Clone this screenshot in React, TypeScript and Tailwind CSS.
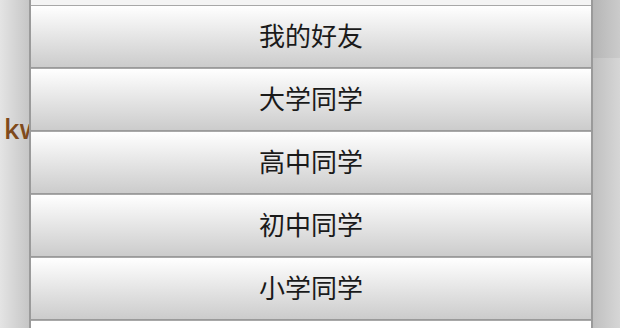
import React from "react";

const rows = ["我的好友", "大学同学", "高中同学", "初中同学", "小学同学"];

export default function App() {
  return (
    <div className="flex w-[620px] h-[328px] overflow-hidden bg-white">
      <div className="w-[29px] h-full shrink-0 overflow-hidden bg-gradient-to-r from-[#e4e4e4] to-[#c6c6c6] flex flex-col">
        <div className="h-[113px] shrink-0" />
        <div
          className="pl-[4px] text-[27px] leading-[32px] font-semibold text-[#7f4a1c] whitespace-nowrap"
          style={{ fontFamily: '"Open Sans", sans-serif' }}
        >
          kw
        </div>
      </div>
      <div className="w-[564px] h-full shrink-0 flex flex-col border-l-2 border-r-2 border-[#9a9a9a] bg-white">
        <div className="h-[5px] shrink-0 bg-[#f4f4f4]" />
        {rows.map((r) => (
          <div
            key={r}
            className="h-[63px] shrink-0 flex items-center justify-center pb-[5px] border-t border-[#a8a8a8] bg-gradient-to-b from-[#ffffff] to-[#cbcbcb] shadow-[inset_0_-1px_0_#9a9a9a] text-[26px] text-[#1a1a1a]"
            style={{ fontFamily: '"Noto Sans CJK SC", sans-serif' }}
          >
            {r}
          </div>
        ))}
        <div className="flex-1 border-t border-[#a8a8a8] bg-white" />
      </div>
      <div className="flex-1 h-full flex flex-col">
        <div className="h-[58px] shrink-0 bg-gradient-to-r from-[#b6b6b6] to-[#cbcbcb]" />
        <div className="flex-1 bg-gradient-to-r from-[#c0c0c0] to-[#d6d6d6]" />
      </div>
    </div>
  );
}
